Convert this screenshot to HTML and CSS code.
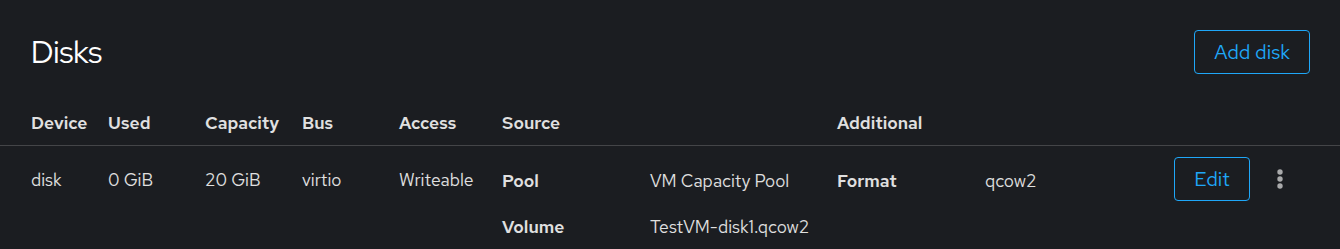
FILE: index.html
```html
<!DOCTYPE html>
<html>
<head>
<meta charset="utf-8">
<link rel="stylesheet" href="styles.css">
</head>
<body>
<section class="card">
  <header class="card-header">
    <h2 class="title">Disks</h2>
    <button class="btn">Add disk</button>
  </header>
  <div class="grid head">
    <div>Device</div>
    <div>Used</div>
    <div>Capacity</div>
    <div>Bus</div>
    <div>Access</div>
    <div>Source</div>
    <div>Additional</div>
    <div></div>
  </div>
  <div class="grid body">
    <div class="cell">disk</div>
    <div class="cell">0 GiB</div>
    <div class="cell">20 GiB</div>
    <div class="cell">virtio</div>
    <div class="cell">Writeable</div>
    <dl class="dl">
      <dt>Pool</dt><dd>VM Capacity Pool</dd>
      <dt>Volume</dt><dd>TestVM-disk1.qcow2</dd>
    </dl>
    <dl class="dl">
      <dt>Format</dt><dd>qcow2</dd>
    </dl>
    <div class="actions">
      <button class="btn edit">Edit</button>
      <span class="kebab" aria-label="Actions">
        <svg width="6" height="20" viewBox="0 0 6 20"><circle cx="3" cy="3" r="2.7" fill="#a9aaab"/><circle cx="3" cy="10" r="2.7" fill="#a9aaab"/><circle cx="3" cy="17" r="2.7" fill="#a9aaab"/></svg>
      </span>
    </div>
  </div>
</section>
</body>
</html>
```
FILE: styles.css
```css
html, body {
  margin: 0;
  padding: 0;
  background: #1b1d21;
}
body {
  font-family: "Red Hat Text", "Inter", "Liberation Sans", sans-serif;
  color: #e0e0e0;
  font-size: 17.5px;
}
.card {
  width: 1340px;
  height: 249px;
  overflow: hidden;
}
.card-header {
  height: 100px;
  box-sizing: border-box;
  display: flex;
  align-items: flex-start;
  justify-content: space-between;
  padding: 30px 30px 0 31px;
}
.title {
  margin: 0;
  height: 44px;
  line-height: 44px;
  font-size: 31px;
  font-weight: 400;
  color: #ffffff;
  font-family: "Red Hat Display", "Inter", "Liberation Sans", sans-serif;
}
.btn {
  font-family: inherit;
  font-size: 20px;
  color: #1fa7f8;
  background: transparent;
  border: 1px solid #1fa7f8;
  border-radius: 4px;
  height: 44px;
  padding: 0 19px;
  cursor: pointer;
}
.grid {
  display: grid;
  grid-template-columns: 77px 97px 97px 97px 103px 335px 337px 1fr;
  padding-left: 31px;
}
.head {
  height: 45px;
  align-items: center;
  font-weight: 600;
  border-bottom: 1px solid #444548;
}
.body {
  padding-top: 11px;
  align-items: start;
}
.cell {
  line-height: 46px;
}
.dl {
  margin: 0;
  display: grid;
  grid-template-columns: 148px 1fr;
  grid-auto-rows: 46px;
  align-items: center;
}
.dl dt {
  font-weight: 600;
}
.dl dd {
  margin: 0;
}
.actions {
  display: flex;
  align-items: center;
  height: 44px;
  gap: 27px;
}
.edit {
  width: 76px;
  padding: 0;
}
.kebab {
  display: flex;
  align-items: center;
}
```
